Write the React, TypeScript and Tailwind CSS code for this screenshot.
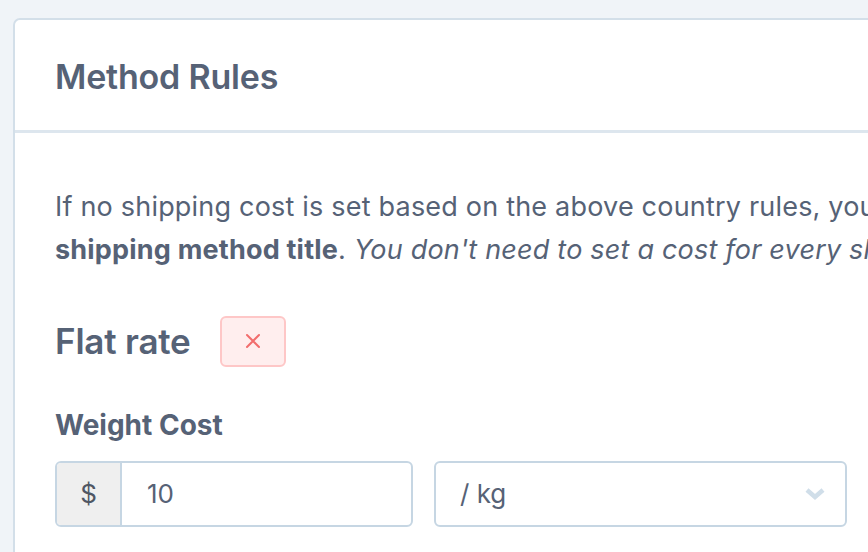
import React from "react";

const font = { fontFamily: "Inter, 'Noto Sans', sans-serif" };

export default function App() {
  return (
    <div
      className="w-[868px] h-[552px] overflow-hidden bg-[#f0f4f8] pl-[13px] pt-[18px]"
      style={font}
    >
      <div className="w-[1000px] h-[600px] bg-white border-2 border-[#d3dfe9] rounded-tl-[7px]">
        {/* Header */}
        <div className="h-[113px] flex items-center pl-[40px] border-b-[3px] border-[#dde6ee]">
          <h2 className="text-[34px] font-semibold text-[#566276] tracking-[-0.2px] mt-[3px]">
            Method Rules
          </h2>
        </div>

        {/* Body */}
        <div className="pl-[40px] pt-[52px]">
          <p className="text-[27px] leading-[43px] tracking-[0.2px] text-[#566276] whitespace-nowrap">
            If no shipping cost is set based on the above country rules, you can set a cost for the
            <br />
            <strong className="font-bold">shipping method title</strong>.{" "}
            <em>You don't need to set a cost for every shipping method.</em>
          </p>

          <div className="flex items-center mt-[44px] gap-[29px]">
            <h3 className="text-[35px] font-semibold text-[#566276] tracking-[-0.2px]">
              Flat rate
            </h3>
            <button className="w-[66px] h-[51px] flex items-center justify-center bg-[#ffeeee] border-2 border-[#fec7c7] rounded-[6px]">
              <svg width="16" height="16" viewBox="0 0 16 16" fill="none">
                <path
                  d="M2 2L14 14M14 2L2 14"
                  stroke="#f26d6d"
                  strokeWidth="2"
                  strokeLinecap="round"
                />
              </svg>
            </button>
          </div>

          <div className="mt-[41px] text-[28px] font-bold text-[#566276] leading-[32px]">
            Weight Cost
          </div>

          <div className="flex mt-[20px] gap-[21px]">
            <div className="flex w-[358px] h-[66px] border-2 border-[#c6d6e3] rounded-[6px] overflow-hidden">
              <div className="w-[65px] bg-[#efefef] border-r-2 border-[#c6d6e3] flex items-center justify-center text-[26px] text-[#4f5764]">
                $
              </div>
              <div className="flex-1 flex items-center pl-[25px] text-[26px] text-[#566276]">
                10
              </div>
            </div>
            <div className="flex items-center justify-between w-[413px] h-[66px] border-2 border-[#c6d6e3] rounded-[6px] pl-[24px] pr-[19px]">
              <span className="text-[26px] text-[#566276]">/ kg</span>
              <svg width="22" height="14" viewBox="0 0 22 14" fill="none">
                <path
                  d="M3 3L11 10L19 3"
                  stroke="#d0dee9"
                  strokeWidth="4.5"
                  strokeLinejoin="miter"
                />
              </svg>
            </div>
          </div>
        </div>
      </div>
    </div>
  );
}
